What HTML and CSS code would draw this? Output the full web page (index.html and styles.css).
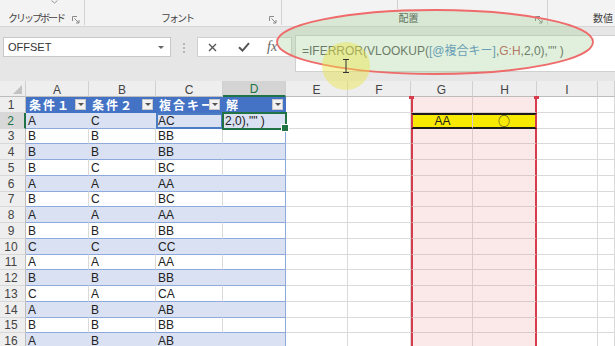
FILE: index.html
```html
<!DOCTYPE html>
<html lang="ja">
<head>
<meta charset="utf-8">
<title>Excel</title>
<link rel="stylesheet" href="styles.css">
</head>
<body>
<div class="app">
  <div class="ribbon">
    <div class="grp g1">
      <div class="gtop"><svg class="chev" width="7" height="4" viewBox="0 0 7 4"><path d="M0.5 0.5L3.5 3L6.5 0.5" stroke="#999" fill="none"/></svg></div>
      <div class="grow"><span class="glabel kana">クリップボード</span><span class="launch"><svg width="8" height="8" viewBox="0 0 8 8"><path d="M0.5 5V0.5H5M2.5 2.5L7 7M4 7H7V4" stroke="#8a8a8a" fill="none"/></svg></span></div>
    </div>
    <div class="grp g2">
      <div class="gtop"></div>
      <div class="grow"><span class="glabel kana">フォント</span><span class="launch"><svg width="8" height="8" viewBox="0 0 8 8"><path d="M0.5 5V0.5H5M2.5 2.5L7 7M4 7H7V4" stroke="#8a8a8a" fill="none"/></svg></span></div>
    </div>
    <div class="grp g3">
      <div class="gtop"><span class="tick"></span></div>
      <div class="grow"><span class="glabel">配置</span><span class="launch"><svg width="8" height="8" viewBox="0 0 8 8"><path d="M0.5 5V0.5H5M2.5 2.5L7 7M4 7H7V4" stroke="#8a8a8a" fill="none"/></svg></span></div>
    </div>
    <div class="grp g4">
      <div class="gtop"></div>
      <div class="grow"><span class="glabel left">数値</span></div>
    </div>
  </div>

  <div class="fbar">
    <div class="namebox"><span class="nm">OFFSET</span><span class="dd"></span></div>
    <div class="grip"><svg width="2" height="10" viewBox="0 0 2 10"><circle cx="1" cy="1" r="0.9" fill="#a0a0a0"/><circle cx="1" cy="5" r="0.9" fill="#a0a0a0"/><circle cx="1" cy="9" r="0.9" fill="#a0a0a0"/></svg></div>
    <div class="btns">
      <svg class="ix" width="9" height="9" viewBox="0 0 9 9"><path d="M1 1L8 8M8 1L1 8" stroke="#555" stroke-width="1.4"/></svg>
      <svg class="ick" width="12" height="10" viewBox="0 0 12 10"><path d="M1 5.2L4.5 8.6L11 1.2" stroke="#555" stroke-width="2" fill="none"/></svg>
      <span class="fx">fx</span>
    </div>
    <div class="finput">=IFERROR(VLOOKUP(<span class="rb">[@複合キー]</span>,<span class="rr">G:H</span>,2,0),"" )</div>
  </div>

  <div class="sheet">
    <div class="ch corner"><span class="tri"></span></div>
    <div class="ch">A</div><div class="ch">B</div><div class="ch">C</div><div class="ch chs">D</div>
    <div class="ch">E</div><div class="ch">F</div><div class="ch">G</div><div class="ch">H</div><div class="ch">I</div><div class="ch"></div>

    <div class="rh">1</div>
    <div class="t th"><span class="tt">条件１</span><span class="fb"></span></div>
    <div class="t th"><span class="tt">条件２</span><span class="fb"></span></div>
    <div class="t th"><span class="tt">複合キー</span><span class="fb"></span></div>
    <div class="t th"><span class="tt">解</span><span class="fb"></span></div>
    <div class="c"></div><div class="c"></div><div class="c pk pkl top"></div><div class="c pk pkr top"></div><div class="c"></div><div class="c"></div>

    <div class="rh rhs">2</div>
    <div class="t b">A</div><div class="t b">C</div><div class="t b prec">AC</div><div class="t b tr act">2,0),"" )</div>
    <div class="c"></div><div class="c"></div><div class="c pk pkl hl">AA</div><div class="c pk pkr hl"><span class="maru">○</span></div><div class="c"></div><div class="c"></div>

    <div class="rh">3</div>
    <div class="t">B</div><div class="t">B</div><div class="t">BB</div><div class="t tr"></div>
    <div class="c"></div><div class="c"></div><div class="c pk pkl"></div><div class="c pk pkr"></div><div class="c"></div><div class="c"></div>

    <div class="rh">4</div>
    <div class="t b">B</div><div class="t b">B</div><div class="t b">BB</div><div class="t b tr"></div>
    <div class="c"></div><div class="c"></div><div class="c pk pkl"></div><div class="c pk pkr"></div><div class="c"></div><div class="c"></div>

    <div class="rh">5</div>
    <div class="t">B</div><div class="t">C</div><div class="t">BC</div><div class="t tr"></div>
    <div class="c"></div><div class="c"></div><div class="c pk pkl"></div><div class="c pk pkr"></div><div class="c"></div><div class="c"></div>

    <div class="rh">6</div>
    <div class="t b">A</div><div class="t b">A</div><div class="t b">AA</div><div class="t b tr"></div>
    <div class="c"></div><div class="c"></div><div class="c pk pkl"></div><div class="c pk pkr"></div><div class="c"></div><div class="c"></div>

    <div class="rh">7</div>
    <div class="t">B</div><div class="t">C</div><div class="t">BC</div><div class="t tr"></div>
    <div class="c"></div><div class="c"></div><div class="c pk pkl"></div><div class="c pk pkr"></div><div class="c"></div><div class="c"></div>

    <div class="rh">8</div>
    <div class="t b">A</div><div class="t b">A</div><div class="t b">AA</div><div class="t b tr"></div>
    <div class="c"></div><div class="c"></div><div class="c pk pkl"></div><div class="c pk pkr"></div><div class="c"></div><div class="c"></div>

    <div class="rh">9</div>
    <div class="t">B</div><div class="t">B</div><div class="t">BB</div><div class="t tr"></div>
    <div class="c"></div><div class="c"></div><div class="c pk pkl"></div><div class="c pk pkr"></div><div class="c"></div><div class="c"></div>

    <div class="rh">10</div>
    <div class="t b">C</div><div class="t b">C</div><div class="t b">CC</div><div class="t b tr"></div>
    <div class="c"></div><div class="c"></div><div class="c pk pkl"></div><div class="c pk pkr"></div><div class="c"></div><div class="c"></div>

    <div class="rh">11</div>
    <div class="t">A</div><div class="t">A</div><div class="t">AA</div><div class="t tr"></div>
    <div class="c"></div><div class="c"></div><div class="c pk pkl"></div><div class="c pk pkr"></div><div class="c"></div><div class="c"></div>

    <div class="rh">12</div>
    <div class="t b">B</div><div class="t b">B</div><div class="t b">BB</div><div class="t b tr"></div>
    <div class="c"></div><div class="c"></div><div class="c pk pkl"></div><div class="c pk pkr"></div><div class="c"></div><div class="c"></div>

    <div class="rh">13</div>
    <div class="t">C</div><div class="t">A</div><div class="t">CA</div><div class="t tr"></div>
    <div class="c"></div><div class="c"></div><div class="c pk pkl"></div><div class="c pk pkr"></div><div class="c"></div><div class="c"></div>

    <div class="rh">14</div>
    <div class="t b">A</div><div class="t b">B</div><div class="t b">AB</div><div class="t b tr"></div>
    <div class="c"></div><div class="c"></div><div class="c pk pkl"></div><div class="c pk pkr"></div><div class="c"></div><div class="c"></div>

    <div class="rh">15</div>
    <div class="t">B</div><div class="t">B</div><div class="t">BB</div><div class="t tr"></div>
    <div class="c"></div><div class="c"></div><div class="c pk pkl"></div><div class="c pk pkr"></div><div class="c"></div><div class="c"></div>

    <div class="rh">16</div>
    <div class="t b">A</div><div class="t b">B</div><div class="t b">AB</div><div class="t b tr"></div>
    <div class="c"></div><div class="c"></div><div class="c pk pkl"></div><div class="c pk pkr"></div><div class="c"></div><div class="c"></div>
  </div>

  <svg class="overlay" width="615" height="346" viewBox="0 0 615 346">
    <ellipse cx="435" cy="42" rx="158" ry="32" fill="rgba(160,207,147,0.32)" stroke="#ef6a6a" stroke-width="1.8"/>
    <circle cx="346" cy="66" r="24" fill="rgba(236,228,70,0.45)"/>
    <path d="M343 59.5h6M346 59.5v13M343 72.5h6" stroke="#333" stroke-width="1" fill="none"/>
  </svg>
</div>
</body>
</html>
```

FILE: styles.css
```css
* { box-sizing: border-box; }
html, body { margin: 0; padding: 0; }
body {
  width: 615px;
  height: 346px;
  overflow: hidden;
  background: #fff;
  font-family: "Liberation Sans", "Noto Sans CJK JP", sans-serif;
}
.app { position: relative; width: 615px; height: 346px; overflow: hidden; }

/* ribbon */
.ribbon {
  display: flex;
  height: 27px;
  background: #f3f3f3;
  border-bottom: 1px solid #d4d4d4;
}
.grp {
  display: flex;
  flex-direction: column;
  height: 25px;
  border-right: 1px solid #d2d2d2;
}
.g1 { width: 85px; }
.g2 { width: 197px; }
.g3 { width: 266px; }
.g4 { flex: 1; border-right: none; }
.gtop { flex: 1; display: flex; align-items: flex-start; }
.chev { margin-left: 51px; }
.tick { display: block; width: 1px; height: 9px; background: #d0d0d0; margin-left: 115px; }
.grow { display: flex; align-items: flex-end; height: 14px; }
.glabel {
  flex: 1;
  text-align: center;
  font-family: "Noto Sans CJK JP", sans-serif;
  font-size: 10px;
  line-height: 12px;
  color: #444;
  padding-bottom: 1px;
}
.kana { letter-spacing: -2px; }
.glabel.left { text-align: left; padding-left: 45px; }
.launch { display: flex; width: 8px; height: 8px; margin: 0 4px 1px 0; }

/* formula bar */
.fbar {
  display: flex;
  align-items: flex-start;
  height: 54px;
  background: #e6e6e6;
}
.namebox {
  margin: 10px 0 0 3px;
  width: 168px;
  height: 20px;
  background: #fff;
  border: 1px solid #c8c8c8;
  display: flex;
  align-items: center;
  padding: 0 6px 0 4px;
  font-size: 11px;
  color: #333;
}
.nm { flex: 1; }
.dd {
  width: 0; height: 0;
  border-left: 3px solid transparent;
  border-right: 3px solid transparent;
  border-top: 3px solid #666;
}
.grip { margin: 16px 0 0 12px; width: 2px; height: 10px; display: flex; }
.btns {
  margin: 10px 0 0 12px;
  width: 95px;
  height: 20px;
  background: #fff;
  border: 1px solid #d0d0d0;
  display: flex;
  align-items: center;
}
.ix { margin-left: 10px; }
.ick { margin-left: 21px; }
.fx {
  margin-left: 17px;
  font-family: "Liberation Serif", serif;
  font-style: italic;
  font-size: 14px;
  color: #666;
}
.finput {
  margin: 8px 0 0 3px;
  flex: 1;
  height: 37px;
  background: #fff;
  border: 1px solid #d0d0d0;
  border-right: none;
  padding: 5px 0 0 6px;
  font-size: 12px;
  color: #555;
  white-space: nowrap;
}
.rb { color: #4f86c6; }
.rr { color: #c0504d; }

/* sheet */
.sheet {
  display: grid;
  grid-template-columns: 26px 63px 67px 67px 63px 62px 63px 62px 64px 61px 17px;
  grid-template-rows: 16px repeat(16, 15.75px);
  font-size: 12px;
}
.ch {
  background: #eeeeee;
  border-right: 1px solid #d0d0d0;
  border-bottom: 1px solid #bdbdbd;
  display: flex;
  align-items: center;
  justify-content: center;
  padding-top: 2px;
  color: #444;
}
.corner { justify-content: flex-end; align-items: flex-end; padding: 0 3px 2px 0; }
.tri {
  width: 0; height: 0;
  border-left: 9px solid transparent;
  border-bottom: 9px solid #c2c2c2;
}
.chs {
  background: #d4d4d4;
  color: #217346;
  border-bottom: 2px solid #217346;
}
.rh {
  background: #eeeeee;
  border-right: 1px solid #bdbdbd;
  border-bottom: 1px solid #d8d8d8;
  display: flex;
  align-items: center;
  justify-content: center;
  padding: 1px 3px 0 0;
  color: #444;
}
.rhs {
  background: #d8d8d8;
  color: #217346;
  border-right: 2px solid #217346;
}
.c, .t {
  display: flex;
  align-items: center;
  padding: 1px 0 0 2px;
  border-right: 1px solid #dadada;
  border-bottom: 1px solid #dadada;
  overflow: hidden;
  white-space: nowrap;
  color: #222;
}
.t { border-bottom-color: #8ea9db; }
.b { background: #d9e1f2; border-right-color: #d9e1f2; }
.tr { border-right-color: #8ea9db; }
.th {
  background: #4472c4;
  border-right-color: #4472c4;
  border-bottom-color: #4472c4;
  color: #fff;
  font-family: "Noto Sans CJK JP", sans-serif;
  font-weight: 700;
  font-size: 12px;
  letter-spacing: 2px;
  justify-content: space-between;
  padding-left: 3px;
}
.tt { flex: 1 1 auto; min-width: 0; overflow: hidden; white-space: nowrap; }
.fb {
  flex: 0 0 11px;
  height: 11px;
  margin-right: 2px;
  background: #f2f2f2;
  border: 1px solid #c9c9c9;
  display: flex;
  align-items: center;
  justify-content: center;
}
.fb::after {
  content: "";
  border-left: 3px solid transparent;
  border-right: 3px solid transparent;
  border-top: 3px solid #555;
}
.prec { outline: 2px solid #4a7dc4; outline-offset: -2px; }
.act {
  position: relative;
  z-index: 2;
  overflow: visible;
  outline: 2px solid #217346;
  outline-offset: -1px;
}
.act::after {
  content: "";
  position: absolute;
  right: -4px;
  bottom: -4px;
  width: 6px;
  height: 6px;
  background: #217346;
  border: 1px solid #fff;
}
.pk { background: #fbe8e8; border-right-color: #dccaca; border-bottom-color: #dccaca; }
.pkl { border-left: 2px solid #d63c4c; }
.pkr { border-right: 2px solid #d63c4c; }
.top { position: relative; overflow: visible; }
.pkl.top::before, .pkr.top::before {
  content: "";
  position: absolute;
  top: -1px;
  width: 5px;
  height: 3px;
  background: #d63c4c;
}
.pkl.top::before { left: -4px; }
.pkr.top::before { right: -4px; }
.hl {
  background: #f8e900;
  border-top: 2px solid #1a1a1a;
  border-bottom: 2px solid #1a1a1a;
  justify-content: center;
  padding: 0;
  color: #222;
  overflow: visible;
}
.maru {
  font-family: "Noto Sans CJK JP", sans-serif;
  font-size: 12px;
  line-height: 11px;
}

.overlay { position: absolute; left: 0; top: 0; pointer-events: none; }
```
